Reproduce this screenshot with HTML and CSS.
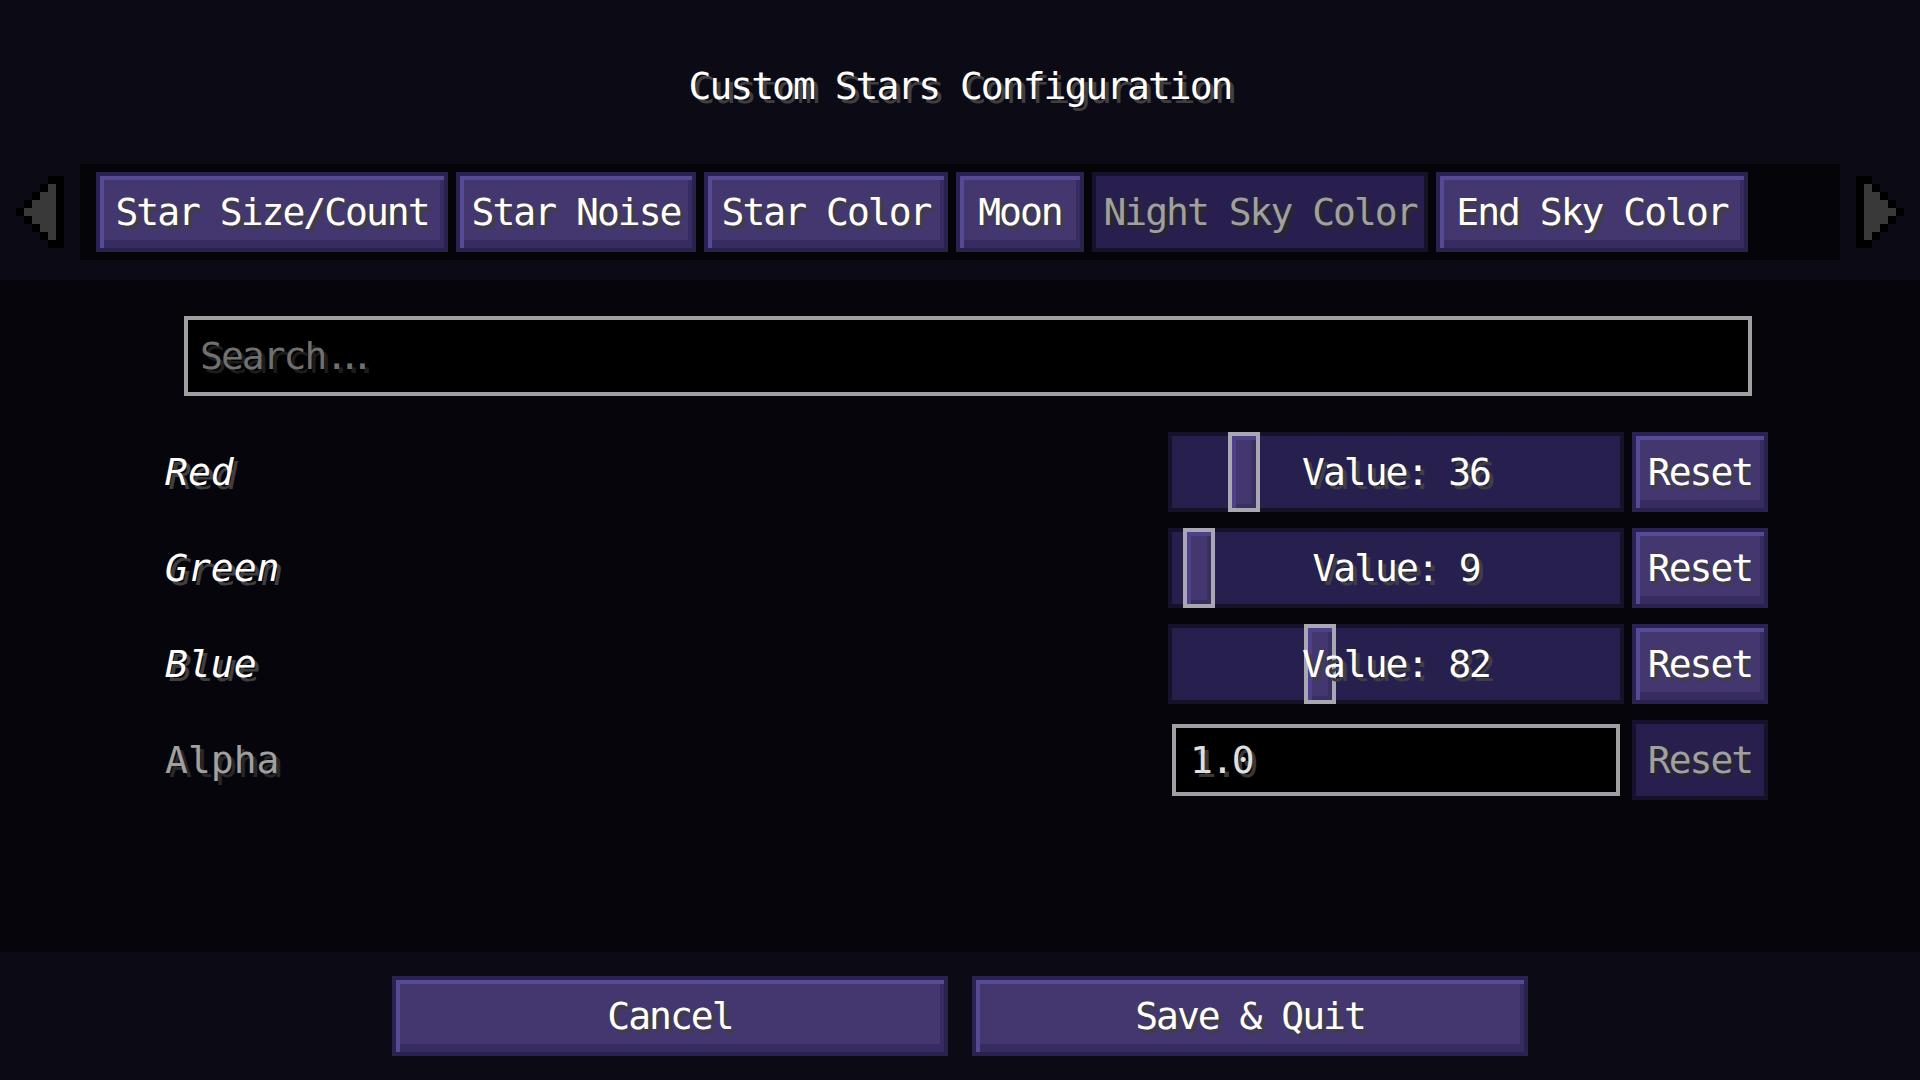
FILE: index.html
```html
<!DOCTYPE html>
<html lang="en">
<head>
    <meta charset="UTF-8">
    <meta name="viewport" content="width=device-width, initial-scale=1.0">
    <title>Custom Stars Configuration</title>
    <link rel="stylesheet" href="styles.css">
</head>
<body>

    <header class="top">
        <h1 class="title">Custom Stars Configuration</h1>
        <nav class="tab-row">
            <span class="arrow">
                <svg viewBox="0 0 6 9" shape-rendering="crispEdges">
                    <path d="M4 0H6V9H4V8H3V7H2V6H1V5H0V4H1V3H2V2H3V1H4Z" fill="#000"/>
                    <path d="M4 1H5V8H4V7H3V6H2V5H1V4H2V3H3V2H4Z" fill="#393939"/>
                </svg>
            </span>
            <div class="tab-strip">
                <button class="mc-btn tab tab-size">Star Size/Count</button>
                <button class="mc-btn tab tab-noise">Star Noise</button>
                <button class="mc-btn tab tab-color">Star Color</button>
                <button class="mc-btn tab tab-moon">Moon</button>
                <button class="mc-btn tab tab-night off">Night Sky Color</button>
                <button class="mc-btn tab tab-end">End Sky Color</button>
            </div>
            <span class="arrow flip">
                <svg viewBox="0 0 6 9" shape-rendering="crispEdges">
                    <path d="M4 0H6V9H4V8H3V7H2V6H1V5H0V4H1V3H2V2H3V1H4Z" fill="#000"/>
                    <path d="M4 1H5V8H4V7H3V6H2V5H1V4H2V3H3V2H4Z" fill="#393939"/>
                </svg>
            </span>
        </nav>
    </header>

    <main class="list">
        <div class="search"><span>Search<span class="dots">...</span></span></div>

        <div class="rows">
            <div class="row">
                <span class="label">Red</span>
                <div class="slider">
                    <div class="knob" style="left: 56px"></div>
                    <span>Value: 36</span>
                </div>
                <button class="mc-btn reset">Reset</button>
            </div>
            <div class="row">
                <span class="label">Green</span>
                <div class="slider">
                    <div class="knob" style="left: 11px"></div>
                    <span>Value: 9</span>
                </div>
                <button class="mc-btn reset">Reset</button>
            </div>
            <div class="row">
                <span class="label">Blue</span>
                <div class="slider">
                    <div class="knob" style="left: 132px"></div>
                    <span>Value: 82</span>
                </div>
                <button class="mc-btn reset">Reset</button>
            </div>
            <div class="row">
                <span class="label plain">Alpha</span>
                <div class="field">
                    <div class="field-box">1.0</div>
                </div>
                <button class="mc-btn reset off">Reset</button>
            </div>
        </div>
    </main>

    <footer class="bottom">
        <button class="mc-btn wide">Cancel</button>
        <button class="mc-btn wide">Save &amp; Quit</button>
    </footer>

</body>
</html>
```

FILE: styles.css
```css
* {
    box-sizing: border-box;
}

body {
    margin: 0;
    width: 1920px;
    height: 1080px;
    overflow: hidden;
    display: flex;
    flex-direction: column;
    background-color: #06050b;
    font-family: "DejaVu Sans Mono", "Liberation Mono", monospace;
    font-size: 38px;
    letter-spacing: -2px;
    color: #ffffff;
    text-shadow: 4px 4px 0 #3f3f3f;
}

/* header with title and tabs */
.top {
    height: 280px;
    background-color: #0c0a15;
}

.title {
    margin: 0;
    height: 164px;
    padding-top: 8px;
    display: flex;
    align-items: center;
    justify-content: center;
    font-size: 38px;
    font-weight: normal;
}

.tab-row {
    display: flex;
    align-items: center;
    gap: 16px;
    padding-left: 16px;
    height: 96px;
}

.arrow svg {
    display: block;
    width: 48px;
    height: 72px;
}

.arrow.flip svg {
    transform: scaleX(-1);
}

.tab-strip {
    width: 1760px;
    height: 96px;
    display: flex;
    gap: 8px;
    padding: 8px 16px;
    background-color: #050408;
}

/* button look */
.mc-btn {
    margin: 0;
    padding: 0;
    height: 80px;
    display: flex;
    align-items: center;
    justify-content: center;
    font: inherit;
    letter-spacing: inherit;
    color: #ffffff;
    text-shadow: 4px 4px 0 #3f3f3f;
    background-color: #44376f;
    border: 4px solid #2a2350;
    box-shadow: inset 4px 4px 0 #574a94, inset -4px -8px 0 #372b61;
    cursor: pointer;
}

.mc-btn.off {
    color: #a0a0a0;
    text-shadow: 4px 4px 0 #282828;
    background-color: #281f4f;
    border-color: #17122b;
    box-shadow: none;
}

.tab-size { width: 352px; }
.tab-noise { width: 240px; }
.tab-color { width: 244px; }
.tab-moon { width: 128px; }
.tab-night { width: 336px; }
.tab-end { width: 312px; }

/* option list */
.list {
    flex: 1;
    padding-top: 36px;
}

.search {
    margin-left: 184px;
    width: 1568px;
    height: 80px;
    display: flex;
    align-items: center;
    padding-left: 12px;
    background-color: #000000;
    border: 4px solid #a0a0a0;
    color: #707070;
    text-shadow: 4px 4px 0 #1c1c1c;
}

.search .dots {
    letter-spacing: -10px;
}

.rows {
    margin: 36px 0 0 165px;
    width: 1603px;
    display: flex;
    flex-direction: column;
    gap: 16px;
}

.row {
    height: 80px;
    display: flex;
    align-items: center;
    gap: 8px;
}

.label {
    flex: 1;
    font-style: italic;
    letter-spacing: 0;
}

.label.plain {
    font-style: normal;
    color: #a0a0a0;
    text-shadow: 4px 4px 0 #282828;
}

.slider {
    position: relative;
    width: 456px;
    height: 80px;
    display: flex;
    align-items: center;
    justify-content: center;
    background-color: #271f4e;
    border: 4px solid #16122a;
}

.slider span {
    position: relative;
}

.knob {
    position: absolute;
    top: -4px;
    width: 32px;
    height: 80px;
    background-color: #44376f;
    border: 4px solid #a9a8b2;
    box-shadow: inset 4px 4px 0 #4f4189, inset -4px -4px 0 #3a2f63;
}

.field {
    width: 456px;
    height: 80px;
    padding: 4px;
}

.field-box {
    height: 72px;
    display: flex;
    align-items: center;
    padding-left: 14px;
    background-color: #000000;
    border: 4px solid #a0a0a0;
    color: #e0e0e0;
    text-shadow: 4px 4px 0 #383838;
}

.reset {
    width: 136px;
}

/* bottom buttons */
.bottom {
    height: 128px;
    display: flex;
    justify-content: center;
    gap: 24px;
    padding-top: 24px;
    background-color: #0c0a15;
}

.wide {
    width: 556px;
}
```
